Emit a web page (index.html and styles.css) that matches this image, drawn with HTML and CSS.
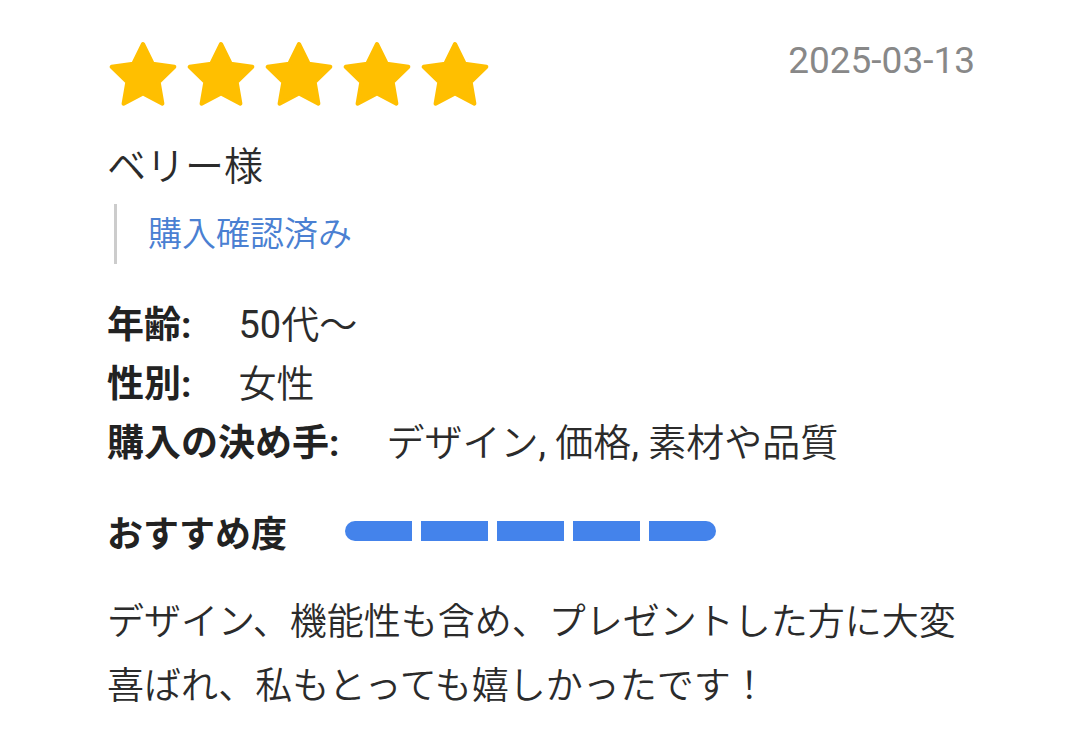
FILE: index.html
```html
<!DOCTYPE html>
<html lang="ja">
<head>
<meta charset="utf-8">
<link rel="stylesheet" href="styles.css">
</head>
<body>
<div class="review">
  <div class="head">
    <div class="stars">
      <svg class="star" viewBox="0 0 70 66"><polygon points="35,3 44.7,22.65 66.38,25.8 50.69,41.1 54.4,62.7 35,52.5 15.6,62.7 19.31,41.1 3.62,25.8 25.3,22.65"/></svg>
      <svg class="star" viewBox="0 0 70 66"><polygon points="35,3 44.7,22.65 66.38,25.8 50.69,41.1 54.4,62.7 35,52.5 15.6,62.7 19.31,41.1 3.62,25.8 25.3,22.65"/></svg>
      <svg class="star" viewBox="0 0 70 66"><polygon points="35,3 44.7,22.65 66.38,25.8 50.69,41.1 54.4,62.7 35,52.5 15.6,62.7 19.31,41.1 3.62,25.8 25.3,22.65"/></svg>
      <svg class="star" viewBox="0 0 70 66"><polygon points="35,3 44.7,22.65 66.38,25.8 50.69,41.1 54.4,62.7 35,52.5 15.6,62.7 19.31,41.1 3.62,25.8 25.3,22.65"/></svg>
      <svg class="star" viewBox="0 0 70 66"><polygon points="35,3 44.7,22.65 66.38,25.8 50.69,41.1 54.4,62.7 35,52.5 15.6,62.7 19.31,41.1 3.62,25.8 25.3,22.65"/></svg>
    </div>
    <div class="date">2025-03-13</div>
  </div>
  <div class="name">ベリー様</div>
  <div class="verified">購入確認済み</div>
  <div class="attrs">
    <div class="attr"><span class="label">年齢:</span><span class="value"><span class="num">50</span>代〜</span></div>
    <div class="attr"><span class="label">性別:</span><span class="value">女性</span></div>
    <div class="attr"><span class="label">購入の決め手:</span><span class="value">デザイン<span class="num">, </span>価格<span class="num">, </span>素材や品質</span></div>
  </div>
  <div class="recommend">
    <span class="rec-label">おすすめ度</span>
    <div class="bar">
      <span class="seg"></span><span class="seg"></span><span class="seg"></span><span class="seg"></span><span class="seg"></span>
    </div>
  </div>
  <p class="comment">デザイン、機能性も含め、プレゼントした方に大変喜ばれ、私もとっても嬉しかったです！</p>
</div>
</body>
</html>
```
FILE: styles.css
```css
html, body {
  margin: 0;
  padding: 0;
  background: #ffffff;
}
body {
  font-family: Roboto, "Noto Sans CJK JP", sans-serif;
  color: #2b2b2b;
}
.review {
  padding: 41px 104px 0 107px;
}
.head {
  display: flex;
  justify-content: space-between;
  align-items: flex-start;
}
.stars {
  display: flex;
  gap: 8px;
  margin-left: 1px;
}
.star {
  display: block;
  width: 70px;
  height: 66px;
  fill: #ffbf00;
  stroke: #ffbf00;
  stroke-width: 4;
  stroke-linejoin: round;
}
.date {
  font-size: 37px;
  line-height: 44px;
  color: #888888;
  margin-top: -2px;
}
.name {
  font-size: 39px;
  line-height: 56px;
  margin-top: 32px;
  font-weight: 350;
}
.verified {
  margin-top: 9px;
  margin-left: 7px;
  border-left: 3px solid #cccccc;
  padding-left: 31px;
  font-size: 34px;
  line-height: 60px;
  color: #4a80d2;
  font-weight: 350;
}
.attrs {
  margin-top: 32px;
  display: flex;
  flex-direction: column;
}
.attr {
  display: flex;
  align-items: baseline;
  gap: 47px;
  font-size: 38px;
  line-height: 58px;
}
.label {
  font-weight: bold;
  font-size: 37px;
  color: #222222;
}
.value {
  color: #2b2b2b;
  font-weight: 350;
}
.num {
  font-weight: 400;
}
.recommend {
  margin-top: 28px;
  display: flex;
  align-items: center;
  gap: 58px;
  height: 60px;
}
.rec-label {
  font-size: 36px;
  font-weight: bold;
  color: #222222;
}
.bar {
  display: flex;
  gap: 9px;
  border-radius: 10px;
  overflow: hidden;
}
.seg {
  width: 67px;
  height: 20px;
  background: #4483eb;
}
.comment {
  margin: 30px 0 0 0;
  font-size: 37px;
  line-height: 64px;
  color: #2b2b2b;
  font-weight: 350;
}
```
